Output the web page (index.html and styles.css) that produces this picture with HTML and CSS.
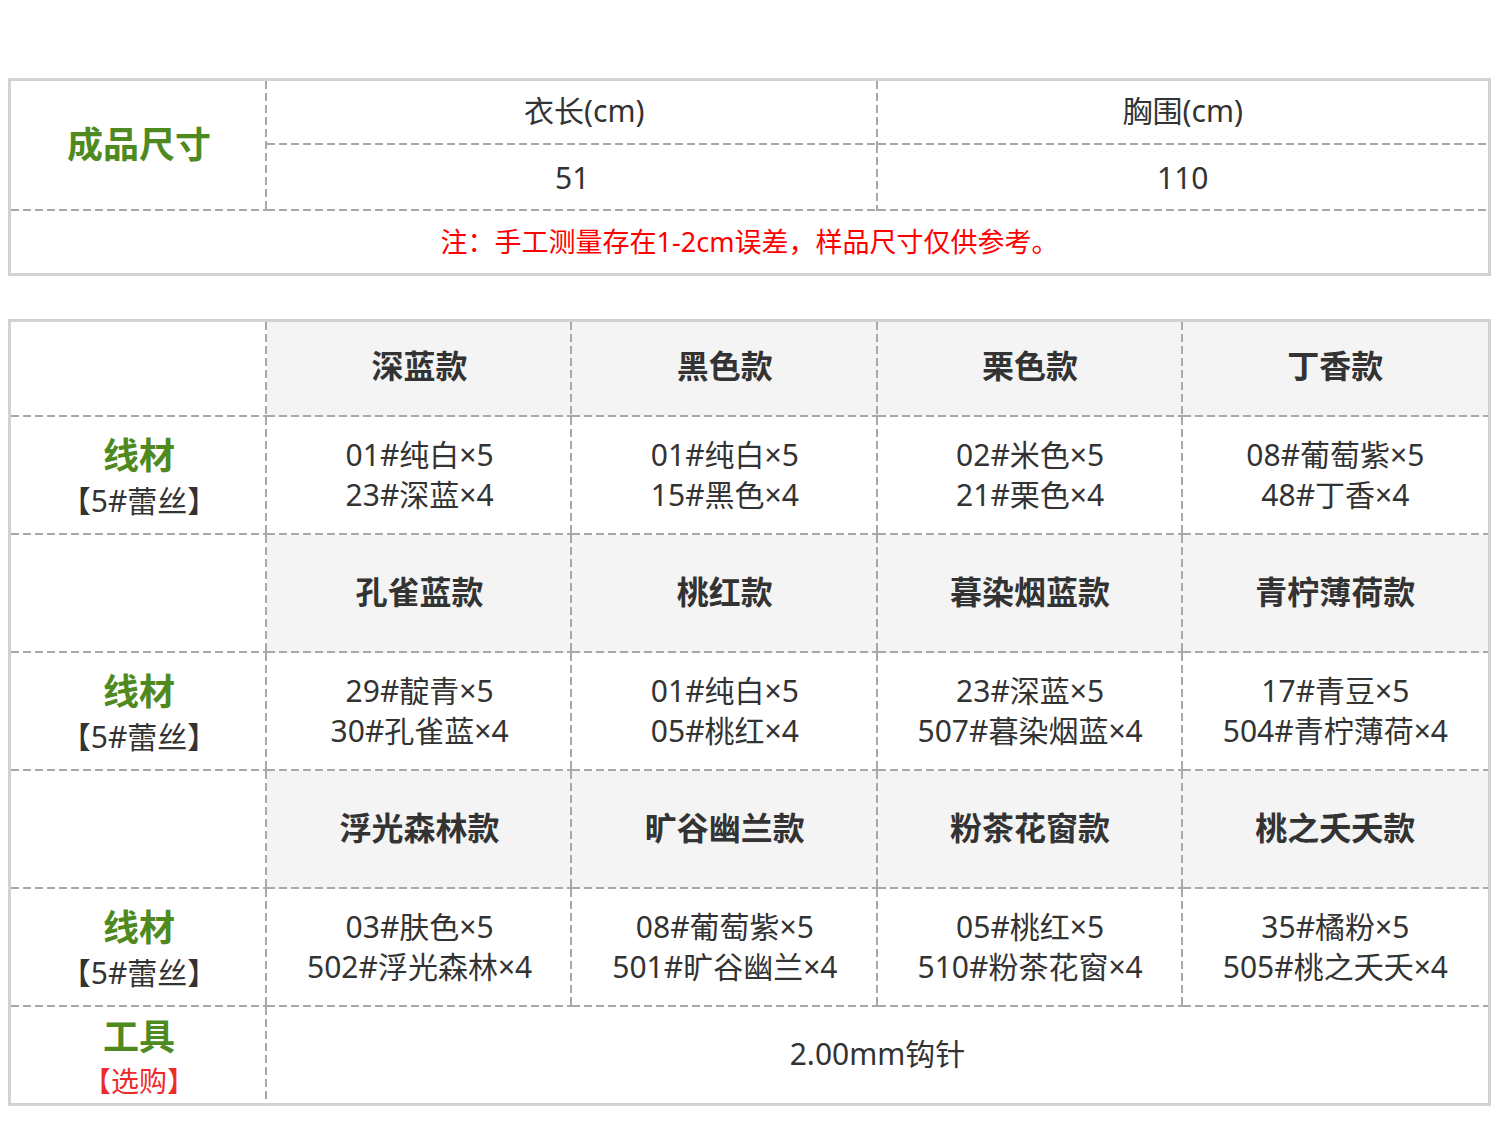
FILE: index.html
```html
<!DOCTYPE html>
<html lang="zh-CN">
<head>
<meta charset="utf-8">
<title>成品尺寸</title>
<link rel="stylesheet" href="styles.css">
</head>
<body>
<div class="size-table">
  <div class="cell title span-2">成品尺寸</div>
  <div class="cell head shift">衣长(cm)</div>
  <div class="cell head last-col">胸围(cm)</div>
  <div class="cell val">51</div>
  <div class="cell val last-col">110</div>
  <div class="cell note span-3 last-col last-row">注：手工测量存在1-2cm误差，样品尺寸仅供参考。</div>
</div>

<div class="color-table">
  <div class="cell blank"></div>
  <div class="cell style first">深蓝款</div>
  <div class="cell style first">黑色款</div>
  <div class="cell style first">栗色款</div>
  <div class="cell style first last-col">丁香款</div>

  <div class="cell label"><span>线材</span><span class="sub">【5#蕾丝】</span></div>
  <div class="cell yarn"><span>01#纯白×5</span><span>23#深蓝×4</span></div>
  <div class="cell yarn"><span>01#纯白×5</span><span>15#黑色×4</span></div>
  <div class="cell yarn"><span>02#米色×5</span><span>21#栗色×4</span></div>
  <div class="cell yarn last-col"><span>08#葡萄紫×5</span><span>48#丁香×4</span></div>

  <div class="cell blank"></div>
  <div class="cell style">孔雀蓝款</div>
  <div class="cell style">桃红款</div>
  <div class="cell style">暮染烟蓝款</div>
  <div class="cell style last-col">青柠薄荷款</div>

  <div class="cell label"><span>线材</span><span class="sub">【5#蕾丝】</span></div>
  <div class="cell yarn"><span>29#靛青×5</span><span>30#孔雀蓝×4</span></div>
  <div class="cell yarn"><span>01#纯白×5</span><span>05#桃红×4</span></div>
  <div class="cell yarn"><span>23#深蓝×5</span><span>507#暮染烟蓝×4</span></div>
  <div class="cell yarn last-col"><span>17#青豆×5</span><span>504#青柠薄荷×4</span></div>

  <div class="cell blank"></div>
  <div class="cell style">浮光森林款</div>
  <div class="cell style">旷谷幽兰款</div>
  <div class="cell style">粉茶花窗款</div>
  <div class="cell style last-col">桃之夭夭款</div>

  <div class="cell label"><span>线材</span><span class="sub">【5#蕾丝】</span></div>
  <div class="cell yarn"><span>03#肤色×5</span><span>502#浮光森林×4</span></div>
  <div class="cell yarn"><span>08#葡萄紫×5</span><span>501#旷谷幽兰×4</span></div>
  <div class="cell yarn"><span>05#桃红×5</span><span>510#粉茶花窗×4</span></div>
  <div class="cell yarn last-col"><span>35#橘粉×5</span><span>505#桃之夭夭×4</span></div>

  <div class="cell label tool last-row"><span>工具</span><span class="sub red">【选购】</span></div>
  <div class="cell yarn span-4 last-col last-row">2.00mm钩针</div>
</div>
</body>
</html>
```

FILE: styles.css
```css
html, body {
  margin: 0;
  padding: 0;
  background: #ffffff;
}

body {
  padding: 78px 9px 0 8px;
  font-family: "Noto Sans", "Noto Sans CJK SC", sans-serif;
  color: #333333;
}

.size-table,
.color-table {
  display: grid;
  width: 1483px;
  box-sizing: border-box;
  border: 3px solid #d2d2d2;
}

.size-table {
  grid-template-columns: 256px 1fr 1fr;
  grid-template-rows: 64px 66px 62px;
}

.color-table {
  margin-top: 43px;
  grid-template-columns: 256px 1fr 1fr 1fr 1fr;
  grid-template-rows: 95px 118px 118px 118px 118px 118px 96px;
}

.cell {
  --vdash: repeating-linear-gradient(to bottom, #a8a8a8 0 8px, transparent 8px 12px);
  --hdash: repeating-linear-gradient(to right, #a8a8a8 0 8px, transparent 8px 12px);
  --fill: #ffffff;
  box-sizing: border-box;
  background:
    var(--vdash) right top / 2px 100% no-repeat,
    var(--hdash) left bottom / 100% 2px no-repeat,
    var(--fill);
  display: flex;
  flex-direction: column;
  align-items: center;
  justify-content: center;
  text-align: center;
  white-space: nowrap;
}

.last-col { --vdash: none; }
.last-row { --hdash: none; }

.span-2 { grid-row: span 2; }
.span-3 { grid-column: span 3; }
.span-4 { grid-column: span 4; }

.title {
  color: #4e8a1f;
  font-weight: 700;
  font-size: 36px;
  line-height: 45px;
  font-family: "Noto Sans CJK SC", sans-serif;
  padding-bottom: 8px;
}

.label {
  color: #4e8a1f;
  font-weight: 700;
  font-size: 36px;
  line-height: 45px;
  font-family: "Noto Sans CJK SC", sans-serif;
  padding-top: 1px;
}

.label.tool {
  padding-top: 5px;
}

.label .sub {
  color: #333333;
  font-weight: 400;
  font-size: 30px;
  line-height: 45px;
  margin-top: 2px;
  font-family: "Noto Sans", "Noto Sans CJK SC", sans-serif;
}

.label .sub.red {
  color: #ee2b2b;
  font-size: 28px;
}

.head {
  font-size: 30px;
  line-height: 40px;
  padding-bottom: 4px;
}

.val {
  font-size: 30px;
  line-height: 40px;
}

.shift { padding-left: 24px; }

.note {
  color: #ff0000;
  font-size: 27px;
  line-height: 40px;
}

.style {
  --fill: #f4f4f4;
  font-weight: 700;
  font-size: 32px;
  line-height: 40px;
  font-family: "Noto Sans CJK SC", sans-serif;
  padding-bottom: 8px;
}

.style.first {
  padding-bottom: 12px;
}

.yarn {
  font-size: 30px;
  line-height: 40px;
  padding-bottom: 2px;
}
```
